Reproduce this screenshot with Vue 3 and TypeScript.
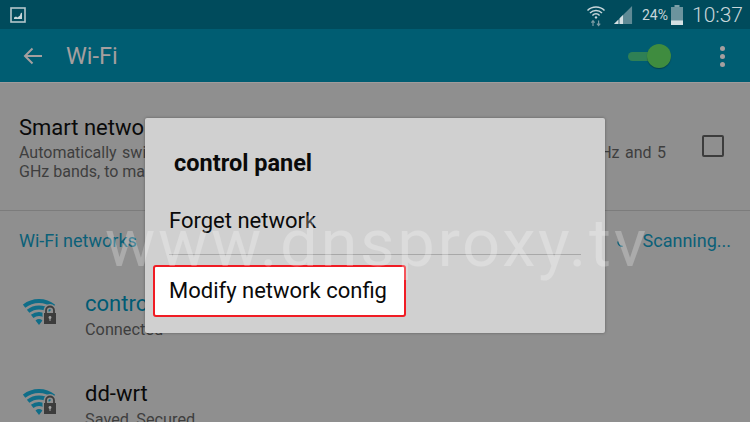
<template>
  <div class="screen">
    <div class="status-bar">
      <svg class="shot-icon" width="16" height="16" viewBox="0 0 16 16">
        <rect x="1" y="1" width="14" height="14" fill="none" stroke="#b4c6cb" stroke-width="1.6" />
        <path d="M4 12V10.4L6 9.6 7.4 10.4 10 8.6 10.6 6.4 12 5.6V12Z" fill="#c8d6da" />
      </svg>
      <div class="status-right">
        <svg width="20" height="24" viewBox="0 0 20 24">
          <path d="M1.500 7.500a12 12 0 0 1 17 0M4 10a8.400 8.400 0 0 1 12 0M6.400 12.400a5 5 0 0 1 7.200 0" fill="none" stroke="#c8d6da" stroke-width="1.500" />
          <circle cx="10" cy="14.400" r="1.200" fill="#c8d6da" />
          <path d="M7 23v-5M5.400 19.600 7 17.600l1.600 2M12.600 17.500v5M11 20.600l1.600 2 1.600-2" fill="none" stroke="#7d9ca4" stroke-width="1.200" />
        </svg>
        <svg class="signal" width="19" height="19" viewBox="0 0 20 20">
          <path d="M0 20 19 1V20Z" fill="#5f8a95" />
          <path d="M0 20 4.500 15.500V20ZM6 20V14L9.500 10.500V20Z" fill="#d5e0e3" />
        </svg>
        <span class="battery-text">24%</span>
        <svg class="battery" width="12" height="20" viewBox="0 0 12 20">
          <rect x="3.500" y="0" width="5" height="2" fill="#7ea0a8" />
          <rect x="0" y="2" width="12" height="18" fill="#6c949e" />
          <rect x="0" y="15.500" width="12" height="4.500" fill="#d5e0e3" />
        </svg>
        <span class="clock">10:37</span>
      </div>
    </div>

    <div class="app-bar">
      <svg class="back" width="20" height="18" viewBox="0 0 20 18">
        <path d="M19 9H2M9.500 1.500 2 9l7.500 7.500" fill="none" stroke="#a59f9f" stroke-width="2" />
      </svg>
      <span class="app-title">Wi-Fi</span>
      <div class="toggle"><span class="knob"></span></div>
      <div class="dots"><i></i><i></i><i></i></div>
    </div>

    <div class="smart-row">
      <div class="smart-text">
        <div class="smart-title">Smart network switch</div>
        <div class="smart-desc first">Automatically switch between Wi-Fi and mobile networks if needed on the 2.4 GHz and 5</div>
        <div class="smart-desc">GHz bands, to maintain a stable Internet connection.</div>
      </div>
      <span class="checkbox"></span>
    </div>

    <div class="section-head">
      <span class="section-title">Wi-Fi networks</span>
      <div class="scan">
        <svg class="spinner" width="8" height="8" viewBox="0 0 10 10">
          <path d="M1 2a6 6 0 0 0 6 6" fill="none" stroke="#0b6078" stroke-width="1.500" />
        </svg>
        <span>Scanning...</span>
      </div>
    </div>

    <div v-for="net in networks" :key="net.name" class="network">
      <svg class="wifi" width="34" height="27" viewBox="0 0 34 27">
        <path d="M1.100 7.200a24 24 0 0 1 29.800 0" fill="none" stroke="#0f6d88" stroke-width="4" />
        <path d="M5.100 12.300a17.500 17.500 0 0 1 21.800 0" fill="none" stroke="#0f6d88" stroke-width="4" />
        <path d="M9.200 17.400a11 11 0 0 1 13.600 0" fill="none" stroke="#0f6d88" stroke-width="4" />
        <path d="M12.500 21.500a5.500 5.500 0 0 1 7 0L16 26Z" fill="#0f6d88" />
        <rect x="19.500" y="12.500" width="14.500" height="14.500" fill="#8f8f8f" />
        <path d="M23 14V11.500a4 4 0 0 1 8 0V14" fill="none" stroke="#8f8f8f" stroke-width="5" />
        <path d="M23 14V11.500a4 4 0 0 1 8 0V14" fill="none" stroke="#3c3c3c" stroke-width="1.800" />
        <rect x="21" y="14" width="12" height="11" fill="#3c3c3c" />
        <circle cx="27" cy="18.500" r="1.400" fill="#a0a0a0" />
        <rect x="26.500" y="19" width="1" height="3" fill="#a0a0a0" />
      </svg>
      <div>
        <div class="net-name" :class="{ connected: net.connected }">{{ net.name }}</div>
        <div class="net-status">{{ net.status }}</div>
      </div>
    </div>

    <div class="dialog">
      <div class="dialog-title">control panel</div>
      <div class="dialog-item">Forget network</div>
      <div class="dialog-line"></div>
      <div class="dialog-item highlight">Modify network config</div>
    </div>

    <div class="watermark">www.dnsproxy.tv</div>
  </div>
</template>

<script setup lang="ts">
interface Network {
  name: string
  status: string
  connected: boolean
}

const networks: Network[] = [
  { name: 'control panel', status: 'Connected', connected: true },
  { name: 'dd-wrt', status: 'Saved, Secured', connected: false },
]
</script>

<style>
html,
body {
  margin: 0;
  overflow: hidden;
}
</style>

<style scoped>
.screen {
  position: relative;
  width: 750px;
  height: 422px;
  overflow: hidden;
  background: #8f8f8f;
  font-family: Roboto, "Liberation Sans", sans-serif;
  color: #0a0a0a;
}

.status-bar {
  height: 29px;
  display: flex;
  align-items: center;
  justify-content: space-between;
  padding: 0 7px 0 10px;
  background: #004b5c;
  box-sizing: border-box;
}

.status-right {
  display: flex;
  align-items: center;
  color: #c8d6da;
}

.signal {
  margin-left: 8px;
}

.battery-text {
  margin: 0 3px 0 9px;
  font-size: 14px;
}

.clock {
  margin-left: 9px;
  font-size: 21px;
  font-weight: 300;
}

.app-bar {
  height: 54px;
  display: flex;
  align-items: center;
  background: #005d72;
  border-bottom: 1px solid #a09c9c;
  box-sizing: border-box;
  padding: 1px 25px 0 23px;
}

.back {
  flex: none;
}

.app-title {
  margin-left: 23px;
  font-size: 23.5px;
  color: #a59f9f;
}

.toggle {
  position: relative;
  width: 28px;
  height: 9px;
  margin-left: auto;
  border-radius: 5px;
  background: #2f8055;
}

.knob {
  position: absolute;
  right: -15px;
  top: -8px;
  width: 24px;
  height: 24px;
  border-radius: 50%;
  background: #3f8c3f;
  box-shadow: 0 1px 1px rgba(0, 0, 0, 0.3);
}

.dots {
  display: flex;
  flex-direction: column;
  gap: 3px;
  margin-left: 64px;
}

.dots i {
  width: 5px;
  height: 5px;
  border-radius: 50%;
  background: #a59f9f;
}

.smart-row {
  height: 128px;
  display: flex;
  align-items: flex-start;
  padding: 32px 26px 0 19px;
  box-sizing: border-box;
  border-bottom: 1px solid #7c7c7c;
}

.smart-text {
  flex: 1;
}

.smart-title {
  font-size: 22px;
  line-height: 26px;
}

.smart-desc {
  font-size: 16px;
  line-height: 19px;
  color: #3e3e3e;
}

.smart-desc.first {
  width: 647px;
  margin-top: 2px;
  white-space: nowrap;
  text-align: justify;
  text-align-last: justify;
}

.checkbox {
  width: 18px;
  height: 18px;
  margin-top: 20px;
  border: 2.5px solid #3c3c3c;
  border-radius: 2px;
}

.section-head {
  height: 58px;
  display: flex;
  align-items: center;
  justify-content: space-between;
  padding: 0 19px;
  font-size: 18px;
  color: #0b6078;
  box-sizing: border-box;
}

.scan {
  display: flex;
  align-items: center;
  gap: 18px;
}

.spinner {
  margin-top: 8px;
}

.network {
  height: 90px;
  display: flex;
  gap: 28px;
  padding: 22px 0 0 23px;
  box-sizing: border-box;
}

.wifi {
  margin-top: 8px;
}

.net-name {
  font-size: 22px;
  line-height: 26px;
}

.net-name.connected {
  color: #005b74;
}

.net-status {
  margin-top: 3px;
  font-size: 16.3px;
  line-height: 20px;
  color: #3e3e3e;
}

.dialog {
  position: absolute;
  left: 145px;
  top: 118px;
  width: 460px;
  height: 215px;
  background: #d0d0d0;
  box-shadow: 0 0 3px rgba(0, 0, 0, 0.35);
  border-radius: 2px;
}

.dialog-title {
  margin: 31px 0 0 29px;
  font-size: 23.5px;
  line-height: 28px;
  font-weight: 700;
}

.dialog-item {
  font-size: 22px;
  line-height: 26px;
  padding-left: 24px;
}

.dialog-title + .dialog-item {
  margin-top: 31px;
}

.dialog-line {
  height: 1px;
  margin: 20px 24px 0;
  background: #a8a8a8;
}

.highlight {
  width: 253px;
  height: 52px;
  margin: 10px 0 0 8px;
  padding-left: 14px;
  box-sizing: border-box;
  line-height: 48px;
  background: #fff;
  border: 2px solid #f01c24;
  border-radius: 3px;
}

.watermark {
  position: absolute;
  left: 105px;
  top: 203px;
  font-size: 67px;
  font-weight: 400;
  letter-spacing: 2.6px;
  line-height: 80px;
  color: rgba(255, 255, 255, 0.25);
  white-space: nowrap;
}
</style>
